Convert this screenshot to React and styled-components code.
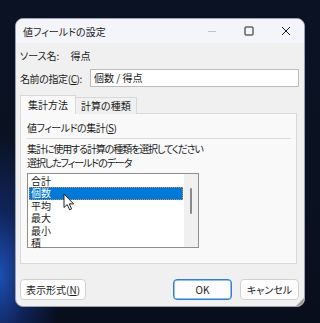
import styled, { createGlobalStyle } from "styled-components";

const GlobalStyle = createGlobalStyle`
  html, body {
    margin: 0;
    padding: 0;
  }
  body {
    width: 320px;
    height: 323px;
    overflow: hidden;
    font-family: "Noto Sans CJK JP", "Noto Sans", sans-serif;
    font-feature-settings: "palt";
  }
`;

const items = ["合計", "個数", "平均", "最大", "最小", "積"];

function App() {
    return (
        <>
            <GlobalStyle />
            <Desktop>
                <Dialog>
                    <TitleBar>
                        <Title>値フィールドの設定</Title>
                        <Controls>
                            <ControlButton>
                                <svg width="10" height="10" viewBox="0 0 10 10">
                                    <path d="M1 5.5h8" stroke="#c4c4c4" strokeWidth="1" />
                                </svg>
                            </ControlButton>
                            <ControlButton>
                                <svg width="10" height="10" viewBox="0 0 10 10">
                                    <rect x="1" y="1" width="8" height="8" rx="0.5" fill="none" stroke="#1b1b1b" strokeWidth="1" />
                                </svg>
                            </ControlButton>
                            <ControlButton>
                                <svg width="10" height="10" viewBox="0 0 10 10">
                                    <path d="M1 1L9 9M9 1L1 9" stroke="#1b1b1b" strokeWidth="1" />
                                </svg>
                            </ControlButton>
                        </Controls>
                    </TitleBar>

                    <Body>
                        <InfoRow>
                            <span>ソース名:</span>
                            <span>得点</span>
                        </InfoRow>
                        <NameRow>
                            <Label>名前の指定(<u>C</u>):</Label>
                            <TextInput>個数 / 得点</TextInput>
                        </NameRow>

                        <TabStrip>
                            <Tab active>集計方法</Tab>
                            <Tab>計算の種類</Tab>
                        </TabStrip>
                        <TabPanel>
                            <GroupTitle>値フィールドの集計(<u>S</u>)</GroupTitle>
                            <Separator />
                            <Hint>集計に使用する計算の種類を選択してください</Hint>
                            <Hint>選択したフィールドのデータ</Hint>
                            <ListBox>
                                <ListItems>
                                    {items.map((it) => (
                                        <ListItem key={it} selected={it === "個数"}>{it}</ListItem>
                                    ))}
                                </ListItems>
                                <ScrollTrack>
                                    <ScrollThumb />
                                </ScrollTrack>
                                <Cursor width="12" height="18" viewBox="0 0 12 18">
                                    <path d="M1 1V14.5L4.2 11.6L6.6 16.8L8.6 15.9L6.3 10.9H10.6Z" fill="#ffffff" stroke="#222" strokeWidth="1" strokeLinejoin="round" />
                                </Cursor>
                            </ListBox>
                        </TabPanel>

                        <ButtonRow>
                            <Button>表示形式(<u>N</u>)</Button>
                            <Spacer />
                            <Button primary>OK</Button>
                            <Button>キャンセル</Button>
                        </ButtonRow>
                    </Body>
                    <Grip width="8" height="8" viewBox="0 0 8 8">
                        <path d="M8 0L0 8H8Z" fill="#9a9a9a" />
                    </Grip>
                </Dialog>
            </Desktop>
        </>
    );
}

const Desktop = styled.div`
    width: 320px;
    height: 323px;
    box-sizing: border-box;
    padding: 18px 0 0 15px;
    background:
        radial-gradient(ellipse 60px 140px at 0% 85%, #1d4fb4 0%, rgba(20, 50, 130, 0.6) 45%, rgba(10, 20, 45, 0) 100%),
        linear-gradient(180deg, #0b1224 0%, #0a1120 60%, #080e1c 100%);
`;

const Dialog = styled.div`
    position: relative;
    width: 290px;
    height: 289px;
    box-sizing: border-box;
    background: #f0f0f0;
    border: 1px solid #9da3ad;
    border-radius: 8px;
    overflow: hidden;
    display: flex;
    flex-direction: column;
`;

const TitleBar = styled.div`
    height: 24px;
    flex-shrink: 0;
    background: #f3f5fa;
    display: flex;
    align-items: center;
    padding-left: 7px;
`;

const Title = styled.div`
    font-size: 10px;
    color: #1b1b1b;
    flex: 1;
    padding-top: 1px;
`;

const Controls = styled.div`
    display: flex;
    height: 100%;
`;

const ControlButton = styled.div`
    width: 37px;
    height: 100%;
    display: flex;
    align-items: center;
    justify-content: center;
`;

const Body = styled.div`
    flex: 1;
    display: flex;
    flex-direction: column;
    padding: 0 5px 0 4px;
    font-size: 10px;
    color: #1b1b1b;
`;

const InfoRow = styled.div`
    margin-top: 5px;
    height: 16px;
    line-height: 16px;
    display: flex;
    gap: 11px;
`;

const NameRow = styled.div`
    margin-top: 5px;
    display: flex;
    align-items: center;
    gap: 8px;
`;

const Label = styled.div`
    white-space: nowrap;
    letter-spacing: -0.4px;
`;

const TextInput = styled.div`
    flex: 1;
    height: 18px;
    box-sizing: border-box;
    background: #ffffff;
    border: 1px solid #bcbcbc;
    line-height: 16px;
    padding-left: 3px;
`;

const TabStrip = styled.div`
    margin-top: 8px;
    display: flex;
    align-items: flex-end;
    height: 19px;
    position: relative;
    z-index: 1;
`;

const Tab = styled.div`
    height: ${(p) => (p.active ? "19px" : "17px")};
    box-sizing: border-box;
    padding: 0 ${(p) => (p.active ? "7px" : "5px")};
    line-height: ${(p) => (p.active ? "18px" : "16px")};
    background: ${(p) => (p.active ? "#f9f9f9" : "#f0f0f0")};
    border: 1px solid #d9d9d9;
    border-bottom: ${(p) => (p.active ? "1px solid #f9f9f9" : "none")};
    margin-right: -1px;
`;

const TabPanel = styled.div`
    margin-top: -1px;
    margin-right: 2px;
    height: 151px;
    box-sizing: border-box;
    background: #f9f9f9;
    border: 1px solid #d9d9d9;
    padding: 6px 5px 0 6px;
    display: flex;
    flex-direction: column;
`;

const GroupTitle = styled.div`
    height: 16px;
    line-height: 16px;
    letter-spacing: -0.5px;
`;

const Separator = styled.div`
    height: 1px;
    background: #dcdcdc;
    margin: 2px 0 3px;
`;

const Hint = styled.div`
    height: 14px;
    line-height: 14px;
    letter-spacing: -1.1px;
    white-space: nowrap;
`;

const ListBox = styled.div`
    position: relative;
    margin-top: 3px;
    width: 172px;
    height: 75px;
    box-sizing: border-box;
    background: #ffffff;
    border: 1px solid #8e8e8e;
    display: flex;
`;

const ListItems = styled.div`
    flex: 1;
    padding: 1px 1px 0 1px;
`;

const ListItem = styled.div`
    height: 12.4px;
    line-height: 12.4px;
    padding-left: 2px;
    box-sizing: border-box;
    color: ${(p) => (p.selected ? "#ffffff" : "#1b1b1b")};
    background: ${(p) => (p.selected ? "#0078d7" : "transparent")};
    outline: ${(p) => (p.selected ? "1px dotted #d08a4a" : "none")};
    outline-offset: -1px;
`;

const ScrollTrack = styled.div`
    width: 14px;
    background: #f0f0f0;
    display: flex;
    justify-content: center;
    padding-top: 14px;
    box-sizing: border-box;
`;

const ScrollThumb = styled.div`
    width: 2px;
    height: 26px;
    border-radius: 1px;
    background: #8a8a8a;
`;

const Cursor = styled.svg`
    position: absolute;
    left: 35px;
    top: 19px;
`;

const ButtonRow = styled.div`
    margin-top: 15px;
    display: flex;
    gap: 8px;
`;

const Spacer = styled.div`
    flex: 1;
`;

const Button = styled.div`
    height: 21px;
    min-width: 59px;
    box-sizing: border-box;
    padding: 0 5px;
    display: flex;
    align-items: center;
    justify-content: center;
    background: #fdfdfd;
    border: 1px solid ${(p) => (p.primary ? "#2f7fd0" : "#d1d1d1")};
    border-radius: 4px;
    ${(p) => p.primary && "box-shadow: inset 0 0 0 0.5px #2f7fd0;"}
`;

const Grip = styled.svg`
    position: absolute;
    right: 0;
    bottom: 0;
`;

export default App;
